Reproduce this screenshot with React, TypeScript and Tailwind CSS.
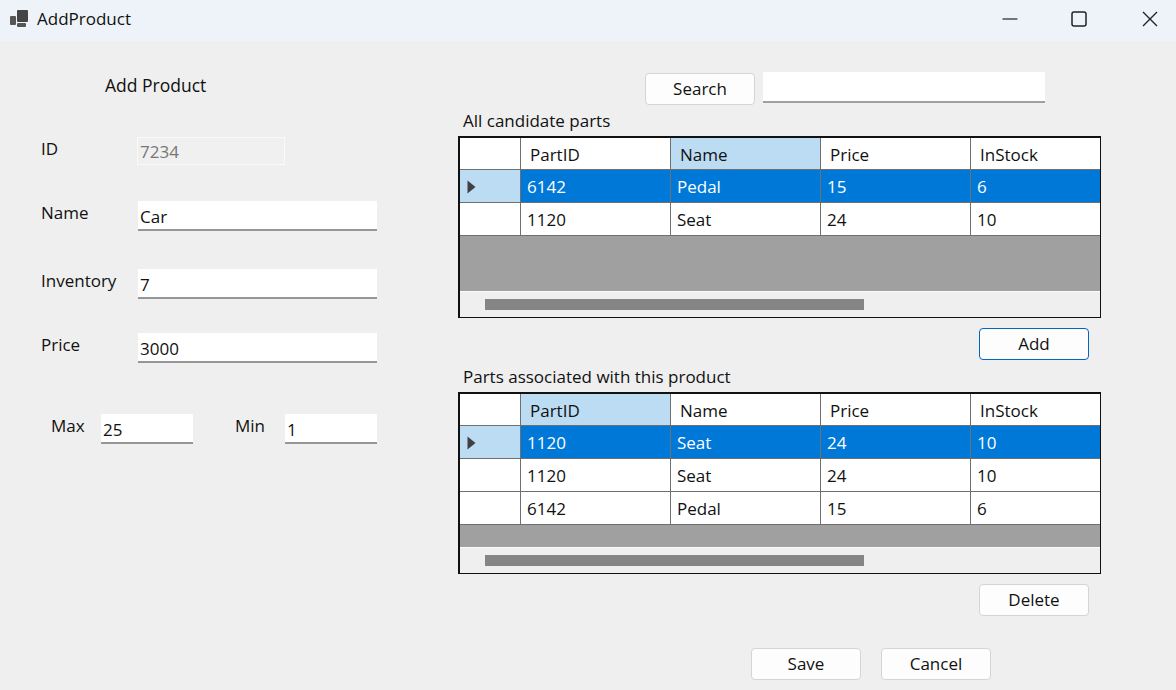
import type { ReactNode } from "react"

const columns = ["PartID", "Name", "Price", "InStock"]

type Row = string[]

function GridTable({
  rows,
  activeColumn,
  emptyHeight,
}: {
  rows: Row[]
  activeColumn: number
  emptyHeight: string
}) {
  return (
    <div className="w-[643px] border-t-2 border-r border-b border-l-2 border-[#111] bg-white">
      <div className="flex h-[32px] border-b border-[#6f6f6f]">
        <div className="w-[61px] shrink-0 border-r border-[#6f6f6f] bg-white" />
        {columns.map((name, i) => (
          <div
            key={name}
            className={`flex items-center pt-[2px] pl-[9px] ${i === 3 ? "flex-1" : "w-[150px] shrink-0 border-r border-[#6f6f6f]"} ${
              i === activeColumn ? "bg-[#bcdcf4]" : "bg-white"
            }`}
          >
            {name}
          </div>
        ))}
      </div>
      {rows.map((row, r) => (
        <div
          key={r}
          className={`flex h-[33px] border-b border-[#6f6f6f] ${r === 0 ? "bg-[#0078d7] text-white" : "bg-white"}`}
        >
          <div
            className={`flex w-[61px] shrink-0 items-center border-r border-[#6f6f6f] pt-[1px] pl-[7px] ${
              r === 0 ? "bg-[#bcdcf4]" : "bg-white"
            }`}
          >
            {r === 0 && (
              <svg width="9" height="14" viewBox="0 0 9 14">
                <path d="M0.5 0.5 L8.5 7 L0.5 13.5 Z" fill="#404040" />
              </svg>
            )}
          </div>
          {row.map((cell, i) => (
            <div
              key={i}
              className={`flex items-center pt-[2px] pl-[6px] ${i === 3 ? "flex-1" : "w-[150px] shrink-0 border-r border-[#6f6f6f]"}`}
            >
              {cell}
            </div>
          ))}
        </div>
      ))}
      <div className={`${emptyHeight} bg-[#a0a0a0]`} />
      <div className="h-[26px] border-t border-[#fafafa] bg-[#efefef] pt-[7px] pl-[25px]">
        <div className="h-[11px] w-[379px] bg-[#858585]" />
      </div>
    </div>
  )
}

function Btn({ children, className = "" }: { children: ReactNode; className?: string }) {
  return (
    <div
      className={`flex h-[32px] w-[110px] items-center justify-center rounded-[4px] border bg-[#fdfdfd] ${className || "border-[#d5d5d5]"}`}
    >
      {children}
    </div>
  )
}

function Field({ value, className }: { value: string; className: string }) {
  return (
    <div className={`flex h-[30px] items-center border-b-2 border-[#969696] bg-white pt-[3px] pl-[2px] ${className}`}>
      {value}
    </div>
  )
}

export default function App() {
  return (
    <div
      className="flex h-[690px] w-[1176px] flex-col overflow-hidden bg-[#efefef] text-[17px] leading-[24px] text-[#111]"
      style={{ fontFamily: '"Open Sans", "Noto Sans", sans-serif' }}
    >
      <div className="flex h-[41px] shrink-0 items-center bg-[#eef3f9] pb-[3px]">
        <svg className="ml-[9px]" width="20" height="18" viewBox="0 0 20 18">
          <rect x="8" y="0" width="11" height="12" rx="1" fill="#444" />
          <rect x="1" y="6" width="6" height="9" rx="1" fill="#555" />
          <rect x="8" y="13" width="9" height="4" rx="1" fill="#555" />
        </svg>
        <span className="ml-[8px]">AddProduct</span>
        <div className="ml-auto flex items-center">
          <svg width="16" height="16" viewBox="0 0 16 16" className="mr-[53px]">
            <path d="M0.5 8 H15.5" stroke="#222" strokeWidth="1.2" />
          </svg>
          <svg width="16" height="16" viewBox="0 0 16 16" className="mr-[55px]">
            <rect x="1" y="1" width="14" height="14" rx="2" fill="none" stroke="#222" strokeWidth="1.5" />
          </svg>
          <svg width="16" height="16" viewBox="0 0 16 16" className="mr-[18px]">
            <path d="M1 1 L15 15 M15 1 L1 15" stroke="#222" strokeWidth="1.4" />
          </svg>
        </div>
      </div>

      <div className="flex flex-1">
        <div className="w-[458px] shrink-0">
          <div className="mt-[32px] ml-[105px] text-[17.5px]">Add Product</div>
          <div className="mt-[40px] flex items-start pl-[41px]">
            <span className="w-[96px]">ID</span>
            <div className="flex h-[28px] w-[148px] items-center border border-[#fafafa] bg-[#f0f0f0] pt-[2px] pl-[2px] text-[#777]">
              7234
            </div>
          </div>
          <div className="mt-[36px] flex items-start pl-[41px]">
            <span className="w-[97px]">Name</span>
            <Field value="Car" className="w-[239px]" />
          </div>
          <div className="mt-[38px] flex items-start pl-[41px]">
            <span className="w-[97px]">Inventory</span>
            <Field value="7" className="w-[239px]" />
          </div>
          <div className="mt-[34px] flex items-start pl-[41px]">
            <span className="w-[97px]">Price</span>
            <Field value="3000" className="w-[239px]" />
          </div>
          <div className="mt-[51px] flex items-start pl-[51px]">
            <span className="w-[50px]">Max</span>
            <Field value="25" className="w-[92px]" />
            <span className="ml-[42px] w-[50px]">Min</span>
            <Field value="1" className="w-[92px]" />
          </div>
        </div>

        <div className="flex w-[643px] shrink-0 flex-col">
          <div className="mt-[31px] flex items-start pl-[187px]">
            <div className="mt-[1px]">
              <Btn>Search</Btn>
            </div>
            <div className="ml-[8px] h-[31px] w-[282px] border-b-2 border-[#a0a0a0] bg-white" />
          </div>
          <div className="mt-[4px] h-[27px] pl-[5px]">All candidate parts</div>
          <GridTable
            activeColumn={1}
            emptyHeight="h-[55px]"
            rows={[
              ["6142", "Pedal", "15", "6"],
              ["1120", "Seat", "24", "10"],
            ]}
          />
          <div className="mt-[10px] flex justify-end pr-[12px]">
            <Btn className="border-[#0067c0]">Add</Btn>
          </div>
          <div className="mt-[5px] h-[27px] pl-[5px]">Parts associated with this product</div>
          <GridTable
            activeColumn={0}
            emptyHeight="h-[22px]"
            rows={[
              ["1120", "Seat", "24", "10"],
              ["1120", "Seat", "24", "10"],
              ["6142", "Pedal", "15", "6"],
            ]}
          />
          <div className="mt-[10px] flex justify-end pr-[12px]">
            <Btn>Delete</Btn>
          </div>
          <div className="mt-[32px] flex gap-[20px] pl-[293px]">
            <Btn>Save</Btn>
            <Btn>Cancel</Btn>
          </div>
        </div>
      </div>
    </div>
  )
}
